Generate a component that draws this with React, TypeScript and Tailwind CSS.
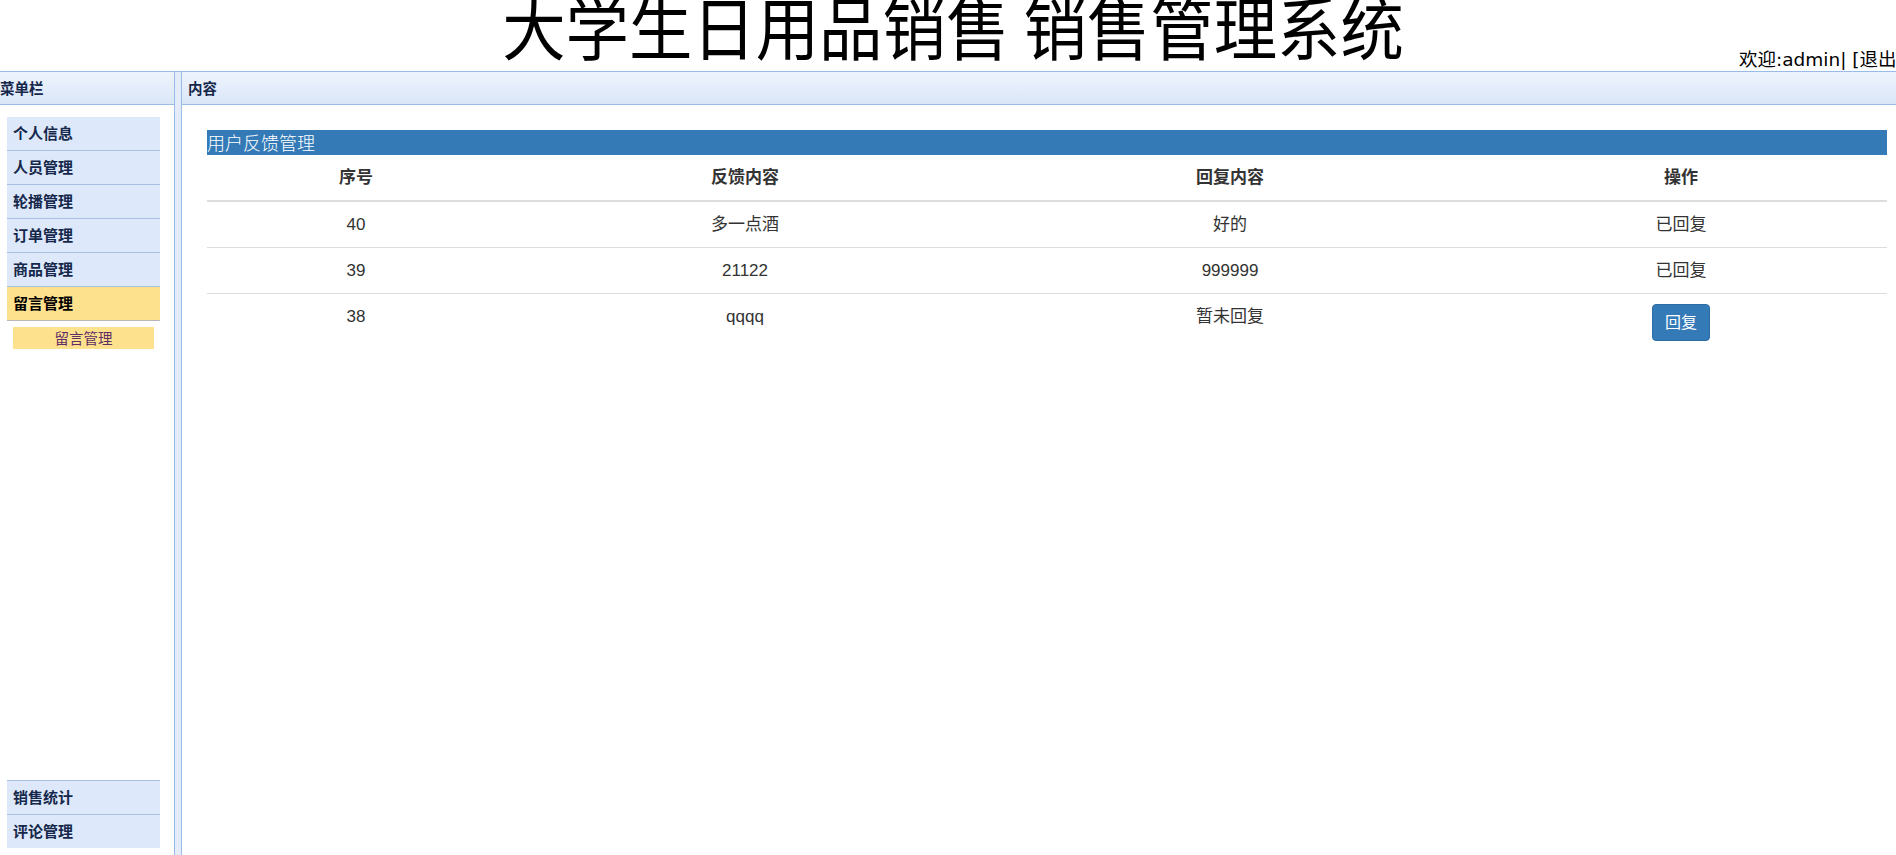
import React from 'react';

const cjk = '"Noto Sans CJK SC", sans-serif';

const topMenu = ['个人信息', '人员管理', '轮播管理', '订单管理', '商品管理'];
const bottomMenu = ['销售统计', '评论管理'];

const rows = [
  { id: 40, content: '多一点酒', reply: '好的', done: true },
  { id: 39, content: '21122', reply: '999999', done: true },
  { id: 38, content: 'qqqq', reply: '暂未回复', done: false },
];

function PanelHeader({ title, className = '' }: { title: string; className?: string }) {
  return (
    <div
      className={`h-[33px] shrink-0 flex items-center border-b border-[#99bbe8] bg-gradient-to-b from-[#eef4fd] to-[#dae6f8] text-[14.5px] font-bold text-[#15284b] ${className}`}
      style={{ fontFamily: cjk }}
    >
      {title}
    </div>
  );
}

export default function App() {
  return (
    <div className="relative w-[1896px] h-[855px] overflow-hidden bg-white">
      {/* top title */}
      <header className="relative h-[72px] border-b border-[#99bbe8] overflow-hidden">
        <h1
          className="pl-[10px] text-center text-[63.4px] leading-[62px] font-normal text-black mt-[-4px] whitespace-nowrap origin-bottom scale-y-110"
          style={{ fontFamily: cjk }}
        >
          大学生日用品销售 销售管理系统
        </h1>
        <span
          className="absolute left-[1739px] top-[48px] whitespace-nowrap text-[18.5px] leading-[24px] text-black"
          style={{ fontFamily: '"DejaVu Sans", "Noto Sans CJK SC", sans-serif' }}
        >
          欢迎:admin| [退出]
        </span>
      </header>

      <div className="flex h-[783px]">
        {/* menu */}
        <aside className="w-[175px] shrink-0 flex flex-col border-r border-[#99bbe8]">
          <PanelHeader title="菜单栏" />
          <div className="flex-1 flex flex-col pt-[12px] pb-[7px]" style={{ fontFamily: cjk }}>
            <div className="ml-[7px] w-[153px]">
              {topMenu.map((m) => (
                <div
                  key={m}
                  className="h-[34px] flex items-center pl-[6px] border-b border-[#a9c0e4] bg-[#dde8fb] text-[15px] font-bold text-[#15284b]"
                >
                  {m}
                </div>
              ))}
              <div className="h-[34px] flex items-center pl-[6px] border-b border-[#b8b8b8] bg-[#fee18d] text-[15px] font-bold text-black">
                留言管理
              </div>
              <div className="mt-[6px] mx-[6px] h-[22px] flex items-center justify-center bg-[#fee18d] text-[14.5px] text-[#5e2f66]">
                留言管理
              </div>
            </div>
            <div className="mt-auto ml-[7px] w-[153px]">
              {bottomMenu.map((m) => (
                <div
                  key={m}
                  className="h-[34px] flex items-center pl-[6px] border-t border-[#a9c0e4] bg-[#dde8fb] text-[15px] font-bold text-[#15284b]"
                >
                  {m}
                </div>
              ))}
            </div>
          </div>
        </aside>

        {/* splitter */}
        <div className="w-[7px] shrink-0 bg-[#e3ecf8] border-r border-[#99bbe8]" />

        {/* content */}
        <main className="flex-1 flex flex-col min-w-0">
          <PanelHeader title="内容" className="pl-[6px]" />
          <div
            className="pl-[25px] pr-[9px] pt-[25px] text-[17px] text-[#333]"
            style={{ fontFamily: '"Liberation Sans", "Noto Sans CJK SC", sans-serif' }}
          >
            <div className="h-[25px] bg-[#337ab7] text-white text-[18px] leading-[25px] font-light" style={{ fontFamily: cjk }}>
              用户反馈管理
            </div>
            <table className="w-full table-fixed border-collapse">
              <colgroup>
                <col className="w-[298px]" />
                <col className="w-[480px]" />
                <col className="w-[490px]" />
                <col className="w-[412px]" />
              </colgroup>
              <thead>
                <tr className="border-b-2 border-[#ddd]">
                  {['序号', '反馈内容', '回复内容', '操作'].map((h) => (
                    <th key={h} className="py-[11px] leading-[23px] font-bold text-center">
                      {h}
                    </th>
                  ))}
                </tr>
              </thead>
              <tbody>
                {rows.map((r, i) => (
                  <tr key={r.id} className={i < rows.length - 1 ? 'border-b border-[#ddd]' : ''}>
                    <td className="py-[11px] leading-[23px] text-center align-top">{r.id}</td>
                    <td className="py-[11px] leading-[23px] text-center align-top">{r.content}</td>
                    <td className="py-[11px] leading-[23px] text-center align-top">{r.reply}</td>
                    <td className="pt-[10px] pb-[11px] leading-[23px] text-center align-top">
                      {r.done ? (
                        <span className="inline-block pt-[1px]">已回复</span>
                      ) : (
                        <button className="px-[11.5px] py-[6px] border border-[#2e6da4] rounded-[4px] bg-[#337ab7] text-white text-[16px] leading-[23px]">
                          回复
                        </button>
                      )}
                    </td>
                  </tr>
                ))}
              </tbody>
            </table>
          </div>
        </main>
      </div>
    </div>
  );
}
